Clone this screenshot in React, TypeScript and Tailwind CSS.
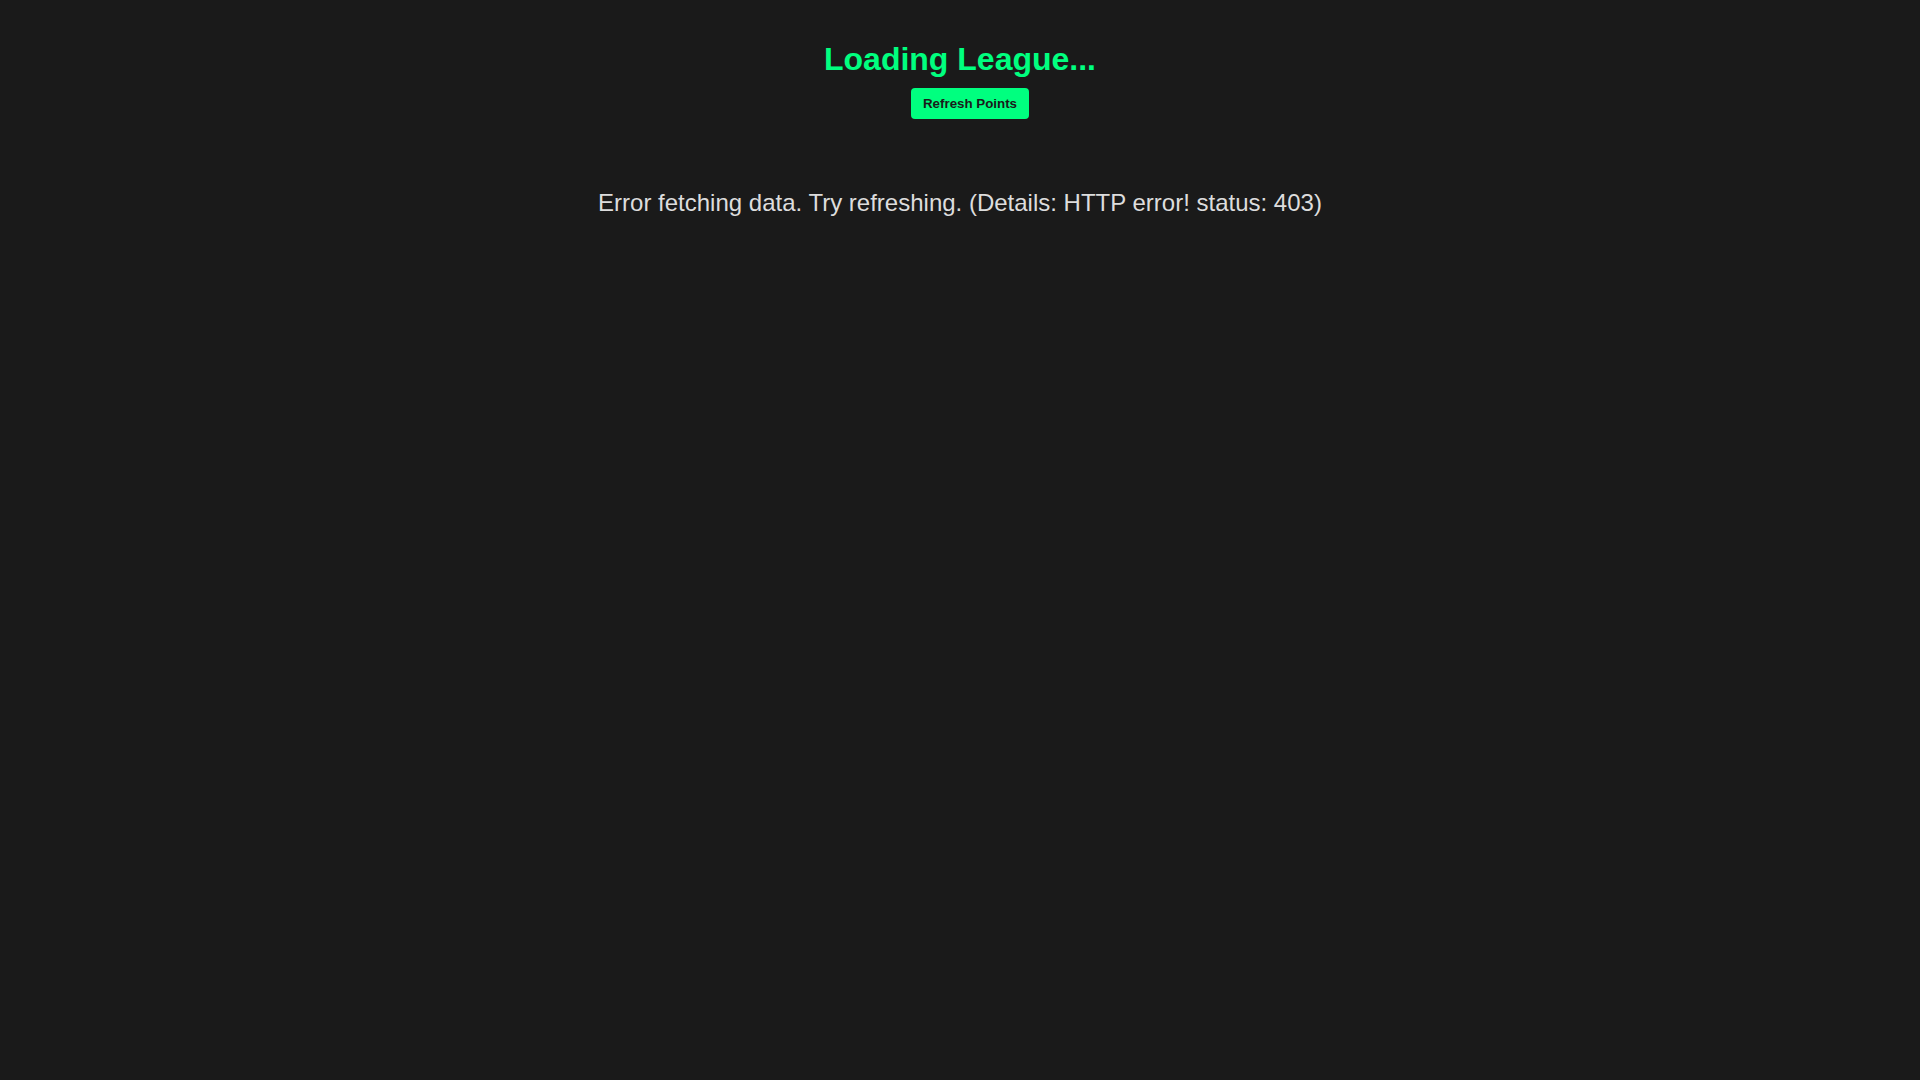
const App = () => {
  return (
    <div className="min-h-screen bg-[#1a1a1a] px-5 pt-5 text-center font-['Liberation_Sans',Arial,sans-serif]">
      <h1 className="mt-[21px] text-[32px] leading-[37px] font-bold text-[#00ff7f]">Loading League...</h1>
      <div className="mt-[10px]">
        <button className="ml-5 h-[31px] rounded px-3 text-[13.33px] leading-[15px] font-bold text-[#1a1a1a] bg-[#00ff7f]">
          Refresh Points
        </button>
      </div>
      <p className="mt-[70px] text-[24px] leading-[28px] text-[#dddddd]">
        Error fetching data. Try refreshing. (Details: HTTP error! status: 403)
      </p>
    </div>
  );
};

export default App;
